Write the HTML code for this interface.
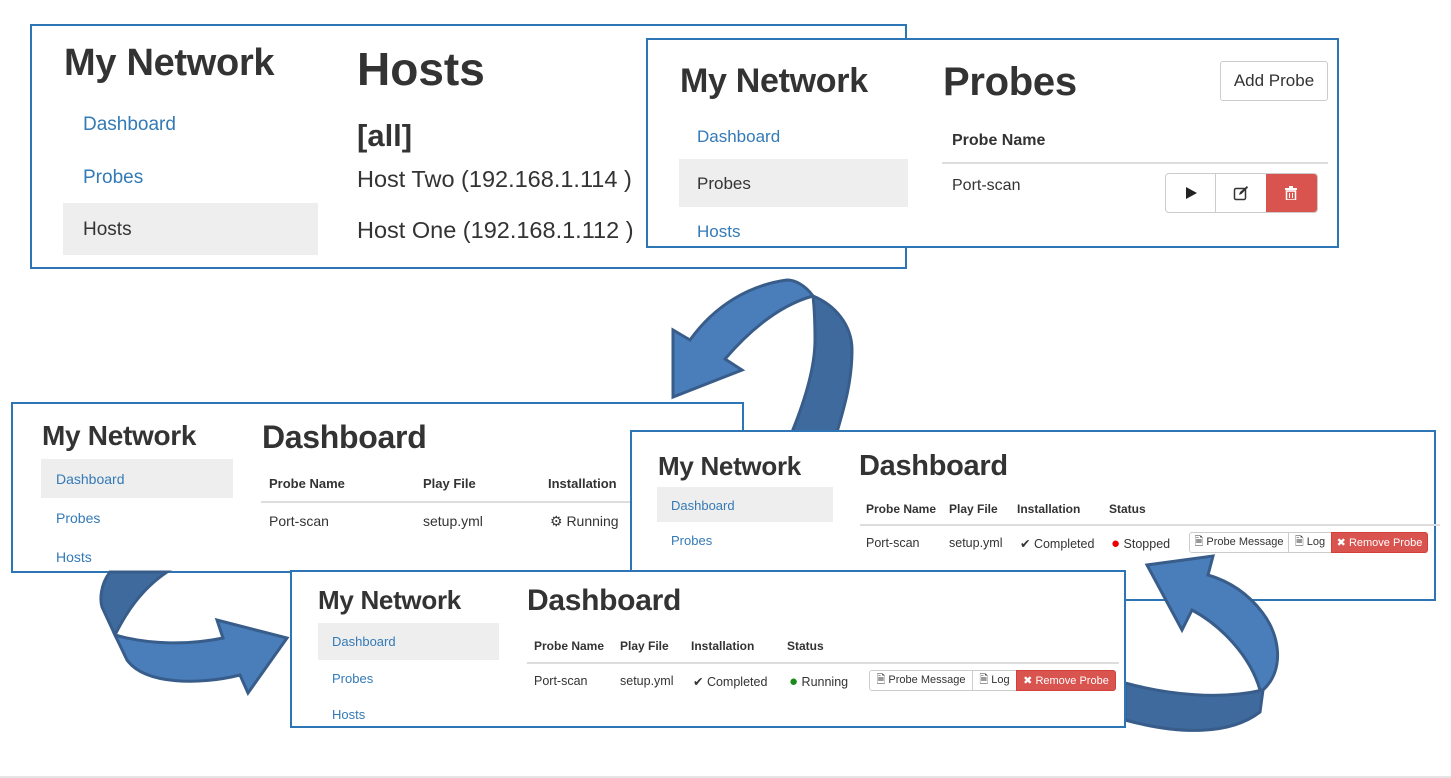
<!DOCTYPE html>
<html><head><meta charset="utf-8"><style>
body{margin:0;width:1451px;height:778px;background:#fff;position:relative;overflow:hidden;font-family:"Liberation Sans",Arial,sans-serif;color:#333}
.p{position:absolute;background:#fff;border:2px solid #2e75b6;box-sizing:border-box}
.t{position:absolute;white-space:nowrap}
.a{color:#337ab7}
.act{position:absolute;background:#eee}
.ln{position:absolute;height:2px;background:#ddd}
.btn{position:absolute;border:1px solid #ccc;background:#fff;box-sizing:border-box;border-radius:3px;display:flex;align-items:center;justify-content:center;white-space:nowrap;color:#333}
.red{background:#d9534f;border-color:#d43f3a;color:#fff}
svg.ar{position:absolute;left:0;top:0}
</style></head><body>

<!-- P1 Hosts -->
<div class="p" style="left:30px;top:24px;width:877px;height:245px;z-index:1">
 <div class="t" style="left:32px;top:16px;font-size:38px;font-weight:bold;color:#333;letter-spacing:-0.3px">My Network</div>
 <div class="t" style="left:325px;top:16px;font-size:46px;font-weight:bold">Hosts</div>
 <div class="t a" style="left:51px;top:88px;font-size:19px">Dashboard</div>
 <div class="t a" style="left:51px;top:141px;font-size:19px">Probes</div>
 <div class="act" style="left:31px;top:177px;width:255px;height:52px"></div>
 <div class="t" style="left:51px;top:193px;font-size:19px;color:#333">Hosts</div>
 <div class="t" style="left:325px;top:92px;font-size:31px;font-weight:bold">[all]</div>
 <div class="t" style="left:325px;top:140px;font-size:23.5px">Host Two (192.168.1.114 )</div>
 <div class="t" style="left:325px;top:191px;font-size:23.5px">Host One (192.168.1.112 )</div>
</div>

<!-- P2 Probes -->
<div class="p" style="left:646px;top:38px;width:693px;height:210px;z-index:2">
 <div class="t" style="left:32px;top:22px;font-size:34px;font-weight:bold;letter-spacing:-0.3px">My Network</div>
 <div class="t" style="left:295px;top:20px;font-size:40px;font-weight:bold;letter-spacing:-0.3px">Probes</div>
 <div class="btn" style="left:572px;top:21px;width:108px;height:40px;font-size:17px">Add Probe</div>
 <div class="t a" style="left:49px;top:87px;font-size:17px">Dashboard</div>
 <div class="act" style="left:31px;top:119px;width:229px;height:48px"></div>
 <div class="t" style="left:49px;top:134px;font-size:17px">Probes</div>
 <div class="t a" style="left:49px;top:182px;font-size:17px">Hosts</div>
 <div class="t" style="left:304px;top:92px;font-size:16px;font-weight:bold">Probe Name</div>
 <div class="ln" style="left:294px;top:122px;width:386px"></div>
 <div class="t" style="left:304px;top:137px;font-size:16px">Port-scan</div>
 <div class="btn" style="left:517px;top:133px;width:153px;height:40px;border-radius:4px;justify-content:flex-start;overflow:hidden">
  <span style="width:50px;height:38px;display:flex;align-items:center;justify-content:center;border-right:1px solid #ccc"><svg width="14" height="14"><path d="M2,1 L13,7 L2,13 Z" fill="#222"/></svg></span>
  <span style="width:50px;height:38px;display:flex;align-items:center;justify-content:center"><svg width="16" height="16"><rect x="1.5" y="3.5" width="11" height="11" rx="1.5" fill="none" stroke="#333" stroke-width="1.5"/><path d="M6,10 L7,7 L14,1 L15,2.5 L8.5,9 Z" fill="#333"/></svg></span>
  <span style="width:52px;height:38px;background:#d9534f;display:flex;align-items:center;justify-content:center"><svg width="12" height="14"><rect x="0" y="2" width="12" height="2" fill="#fff"/><rect x="4" y="0" width="4" height="2" fill="#fff"/><rect x="1.5" y="5" width="9" height="9" fill="none" stroke="#fff" stroke-width="1.5"/><path d="M4.5,7 V12 M7.5,7 V12" stroke="#fff"/></svg></span>
 </div>
</div>

<!-- P3 -->
<div class="p" style="left:11px;top:402px;width:733px;height:171px;z-index:3">
 <div class="t" style="left:29px;top:16px;font-size:28px;font-weight:bold;letter-spacing:-0.3px">My Network</div>
 <div class="t" style="left:249px;top:15px;font-size:32px;font-weight:bold;letter-spacing:-0.3px">Dashboard</div>
 <div class="act" style="left:28px;top:55px;width:192px;height:39px"></div>
 <div class="t a" style="left:43px;top:67px;font-size:14px">Dashboard</div>
 <div class="t a" style="left:43px;top:106px;font-size:14px">Probes</div>
 <div class="t a" style="left:43px;top:145px;font-size:14px">Hosts</div>
 <div class="t" style="left:256px;top:72px;font-size:13px;font-weight:bold">Probe Name</div>
 <div class="t" style="left:410px;top:72px;font-size:13px;font-weight:bold">Play File</div>
 <div class="t" style="left:535px;top:72px;font-size:13px;font-weight:bold">Installation</div>
 <div class="ln" style="left:248px;top:97px;width:480px"></div>
 <div class="t" style="left:256px;top:109px;font-size:14px">Port-scan</div>
 <div class="t" style="left:410px;top:109px;font-size:14px">setup.yml</div>
 <div class="t" style="left:537px;top:109px;font-size:14px">&#9881; Running</div>
</div>

<!-- P4 -->
<div class="p" style="left:630px;top:430px;width:806px;height:171px;z-index:4">
 <div class="t" style="left:26px;top:19px;font-size:26px;font-weight:bold;letter-spacing:-0.3px">My Network</div>
 <div class="t" style="left:227px;top:18px;font-size:29px;font-weight:bold;letter-spacing:-0.3px">Dashboard</div>
 <div class="act" style="left:25px;top:55px;width:176px;height:35px"></div>
 <div class="t a" style="left:39px;top:66px;font-size:13px">Dashboard</div>
 <div class="t a" style="left:39px;top:101px;font-size:13px">Probes</div>
 <div class="t" style="left:234px;top:70px;font-size:12px;font-weight:bold">Probe Name</div>
 <div class="t" style="left:317px;top:70px;font-size:12px;font-weight:bold">Play File</div>
 <div class="t" style="left:385px;top:70px;font-size:12px;font-weight:bold">Installation</div>
 <div class="t" style="left:477px;top:70px;font-size:12px;font-weight:bold">Status</div>
 <div class="ln" style="left:228px;top:92px;width:580px"></div>
 <div class="t" style="left:234px;top:104px;font-size:12.5px">Port-scan</div>
 <div class="t" style="left:317px;top:104px;font-size:12.5px">setup.yml</div>
 <div class="t" style="left:388px;top:104px;font-size:12.5px">&#10004; Completed</div>
 <div class="t" style="left:479px;top:103px;font-size:12.5px"><span style="color:#e00;font-size:15px">&#9679;</span> Stopped</div>
 <div class="btn" style="left:557px;top:100px;width:100px;height:21px;font-size:11px;border-radius:3px 0 0 3px">&#128462; Probe Message</div>
 <div class="btn" style="left:656px;top:100px;width:44px;height:21px;font-size:11px;border-radius:0">&#128462; Log</div>
 <div class="btn red" style="left:699px;top:100px;width:97px;height:21px;font-size:11px;border-radius:0 3px 3px 0">&#10006; Remove Probe</div>
</div>

<!-- P5 -->
<div class="p" style="left:290px;top:570px;width:836px;height:158px;z-index:5">
 <div class="t" style="left:26px;top:13px;font-size:26px;font-weight:bold;letter-spacing:-0.3px">My Network</div>
 <div class="t" style="left:235px;top:12px;font-size:30px;font-weight:bold;letter-spacing:-0.3px">Dashboard</div>
 <div class="act" style="left:26px;top:51px;width:181px;height:37px"></div>
 <div class="t a" style="left:40px;top:62px;font-size:13px">Dashboard</div>
 <div class="t a" style="left:40px;top:99px;font-size:13px">Probes</div>
 <div class="t a" style="left:40px;top:135px;font-size:13px">Hosts</div>
 <div class="t" style="left:242px;top:67px;font-size:12px;font-weight:bold">Probe Name</div>
 <div class="t" style="left:328px;top:67px;font-size:12px;font-weight:bold">Play File</div>
 <div class="t" style="left:399px;top:67px;font-size:12px;font-weight:bold">Installation</div>
 <div class="t" style="left:495px;top:67px;font-size:12px;font-weight:bold">Status</div>
 <div class="ln" style="left:235px;top:90px;width:592px"></div>
 <div class="t" style="left:242px;top:102px;font-size:12.5px">Port-scan</div>
 <div class="t" style="left:328px;top:102px;font-size:12.5px">setup.yml</div>
 <div class="t" style="left:401px;top:102px;font-size:12.5px">&#10004; Completed</div>
 <div class="t" style="left:497px;top:101px;font-size:12.5px"><span style="color:#1a8a1a;font-size:15px">&#9679;</span> Running</div>
 <div class="btn" style="left:577px;top:98px;width:104px;height:21px;font-size:11px;border-radius:3px 0 0 3px">&#128462; Probe Message</div>
 <div class="btn" style="left:680px;top:98px;width:45px;height:21px;font-size:11px;border-radius:0">&#128462; Log</div>
 <div class="btn red" style="left:724px;top:98px;width:100px;height:21px;font-size:11px;border-radius:0 3px 3px 0">&#10006; Remove Probe</div>
</div>

<svg class="ar" width="1451" height="778" style="z-index:2">
 <path d="M813,296 C835,305 852,325 852,350 C852,380 845,405 837,432 L792,432 C803,405 815,370 815,340 C815,320 814,305 813,296 Z" fill="#3e6a9e" stroke="#385d8a" stroke-width="3"/>
 <path d="M690,340 L673,330 L673,397 L742,370 L725,359 C750,330 780,305 813,296 C805,285 795,280 787,280 C750,285 715,305 690,340 Z" fill="#4a7ebb" stroke="#385d8a" stroke-width="3"/>
</svg>
<svg class="ar" width="1451" height="778" style="z-index:3">
 <path d="M110,572 C100,585 100,600 102,607 L115,635 C125,615 140,590 167,572 Z" fill="#3e6a9e" stroke="#385d8a" stroke-width="3"/>
 <path d="M115,635 C150,645 190,645 223,638 L217,620 L287,638 L248,693 L240,675 C200,685 145,685 127,660 Z" fill="#4a7ebb" stroke="#385d8a" stroke-width="3"/>
</svg>
<svg class="ar" width="1451" height="778" style="z-index:4">
 <path d="M1125,683 C1170,695 1220,700 1263,690 L1260,712 C1230,735 1180,735 1125,720 Z" fill="#3e6a9e" stroke="#385d8a" stroke-width="3"/>
 <path d="M1263,690 C1285,670 1280,635 1262,612 C1245,590 1225,580 1208,575 L1213,556 L1147,565 L1182,630 L1192,610 C1220,625 1250,655 1260,690 Z" fill="#4a7ebb" stroke="#385d8a" stroke-width="3"/>
</svg>
<div style="position:absolute;left:0;top:776px;width:1451px;height:2px;background:#e5e5e5"></div>
</body></html>
